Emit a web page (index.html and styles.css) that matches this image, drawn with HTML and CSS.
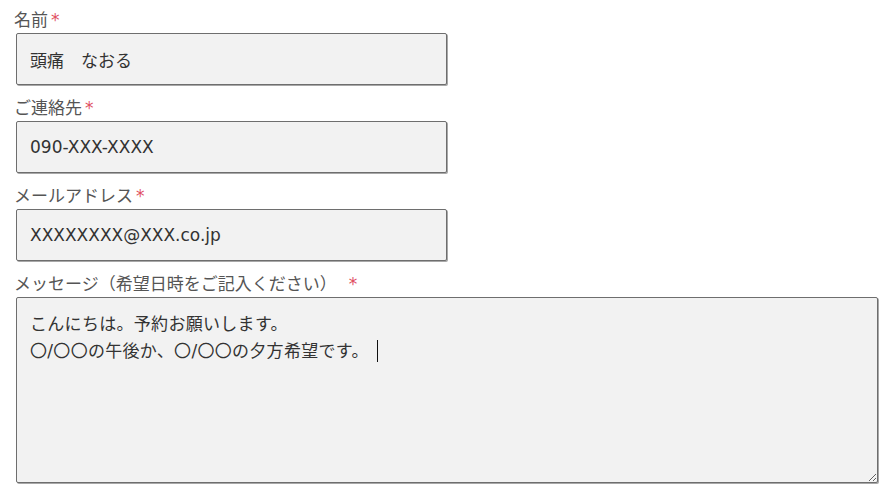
FILE: index.html
```html
<!DOCTYPE html>
<html lang="ja">
<head>
<meta charset="UTF-8">
<meta name="viewport" content="width=device-width, initial-scale=1.0">
<title>お問い合わせ</title>
<link rel="stylesheet" href="styles.css">
</head>
<body>
<form class="contact-form">
  <div class="field">
    <label class="label">名前<span class="required">*</span></label>
    <input class="input" type="text" value="頭痛　なおる">
  </div>
  <div class="field">
    <label class="label">ご連絡先<span class="required">*</span></label>
    <input class="input" type="text" value="090-XXX-XXXX">
  </div>
  <div class="field">
    <label class="label">メールアドレス<span class="required">*</span></label>
    <input class="input" type="text" value="XXXXXXXX@XXX.co.jp">
  </div>
  <div class="field">
    <label class="label">メッセージ（希望日時をご記入ください）<span class="required spaced">*</span></label>
    <div class="textarea">こんにちは。予約お願いします。<br>〇/〇〇の午後か、〇/〇〇の夕方希望です。<span class="caret"></span></div>
  </div>
</form>
</body>
</html>
```

FILE: styles.css
```css
body {
  margin: 0;
  background: #fff;
  font-family: "DejaVu Sans", "Noto Sans CJK JP", sans-serif;
  color: #333;
}

.contact-form {
  padding: 8px 12px 0 14px;
}

.field {
  margin-bottom: 11px;
}

.label {
  display: block;
  font-size: 17px;
  line-height: 25px;
  color: #555;
}

.required {
  color: #e0505f;
  margin-left: 3px;
}

.required.spaced {
  margin-left: 12px;
}

.input,
.textarea {
  display: block;
  box-sizing: border-box;
  margin-left: 2px;
  background: #f2f2f2;
  border: 1px solid #6e6e6e;
  border-radius: 2px;
  box-shadow: 1px 1px 0 #a8a8a8;
  font-family: "DejaVu Sans", "Noto Sans CJK JP", sans-serif;
  font-size: 17px;
  color: #333;
  padding: 0 13px;
}

.input {
  width: 431px;
  height: 52px;
  outline: none;
}

.textarea {
  width: 862px;
  height: 186px;
  padding-top: 13px;
  line-height: 27px;
  letter-spacing: 0.3px;
  resize: both;
  overflow: auto;
}

.caret {
  display: inline-block;
  width: 1px;
  height: 22px;
  margin-left: 8px;
  background: #111;
  vertical-align: -5px;
}
```
